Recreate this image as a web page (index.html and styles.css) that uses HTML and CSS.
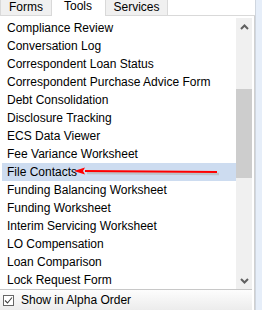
FILE: index.html
```html
<!DOCTYPE html>
<html>
<head>
<meta charset="utf-8">
<link rel="stylesheet" href="styles.css">
</head>
<body>
<div class="frame">
  <div class="left">
    <div class="tabs">
      <div class="tab forms">Forms</div>
      <div class="tab tools active">Tools</div>
      <div class="tab services">Services</div>
      <div class="tab-fill"></div>
    </div>
    <div class="panel">
      <div class="content">
        <ul class="list">
          <li>Compliance Review</li>
          <li>Conversation Log</li>
          <li>Correspondent Loan Status</li>
          <li>Correspondent Purchase Advice Form</li>
          <li>Debt Consolidation</li>
          <li>Disclosure Tracking</li>
          <li>ECS Data Viewer</li>
          <li>Fee Variance Worksheet</li>
          <li class="selected">File Contacts</li>
          <li>Funding Balancing Worksheet</li>
          <li>Funding Worksheet</li>
          <li>Interim Servicing Worksheet</li>
          <li>LO Compensation</li>
          <li>Loan Comparison</li>
          <li>Lock Request Form</li>
        </ul>
        <div class="scrollbar">
          <div class="arrow">
            <svg width="9" height="6" viewBox="0 0 9 6"><path d="M1 5 L4.5 1.5 L8 5" fill="none" stroke="#606060" stroke-width="2"/></svg>
          </div>
          <div class="track"><div class="thumb"></div></div>
          <div class="arrow">
            <svg width="9" height="6" viewBox="0 0 9 6"><path d="M1 1 L4.5 4.5 L8 1" fill="none" stroke="#606060" stroke-width="2"/></svg>
          </div>
        </div>
      </div>
      <div class="footer">
        <span class="check">
          <svg width="11" height="11" viewBox="0 0 11 11"><path d="M2 5.5 L4.5 8 L9 2.5" fill="none" stroke="#404040" stroke-width="1.1"/></svg>
        </span>
        <span class="label">Show in Alpha Order</span>
      </div>
    </div>
  </div>
  <div class="strip"></div>
  <svg class="annot" width="150" height="12" viewBox="0 0 150 12">
    <path d="M14 7 L146 8" stroke="#b0b0b0" stroke-opacity="0.6" stroke-width="2.5"/>
    <path d="M12 5 L144 6" stroke="#ff0000" stroke-width="2"/>
    <path d="M1 5 L12 1.5 L10 5 L12 8.5 Z" fill="#ff0000"/>
  </svg>
</div>
</body>
</html>
```
FILE: styles.css
```css
html, body {
  margin: 0;
  padding: 0;
  background: #ffffff;
}
body {
  font-family: "Liberation Sans", Arial, sans-serif;
  font-size: 12px;
  color: #000;
}
.frame {
  position: relative;
  width: 262px;
  height: 310px;
  display: flex;
  overflow: hidden;
}
.left {
  width: 255px;
  display: flex;
  flex-direction: column;
}
.strip {
  width: 6px;
  background: #e6eef9;
  border-left: 1px solid #cfd6df;
}
.tabs {
  display: flex;
  height: 16px;
  position: relative;
  z-index: 1;
}
.tab {
  box-sizing: border-box;
  height: 16px;
  line-height: 14px;
  text-align: center;
}
.forms, .services {
  background: #f0f0f0;
  border: 1px solid #d9d9d9;
  border-top: none;
}
.forms {
  width: 52px;
}
.tools {
  width: 52px;
  background: #fff;
  line-height: 12px;
  height: 17px;
}
.services {
  width: 63px;
  margin-left: 1px;
}
.tab-fill {
  flex: 1;
  border-bottom: 1px solid #d9d9d9;
}
.panel {
  flex: 1;
  display: flex;
  flex-direction: column;
  border-right: 1px solid #d0d0d0;
}
.content {
  flex: 1;
  display: flex;
  padding-top: 2px;
}
.list {
  list-style: none;
  margin: 0;
  padding: 1px 0 0 2px;
  flex: 1;
}
.list li {
  height: 18px;
  line-height: 18px;
  padding-left: 5px;
  white-space: nowrap;
}
.list li.selected {
  background: #cddcf0;
}
.scrollbar {
  width: 16px;
  margin-right: 2px;
  display: flex;
  flex-direction: column;
  background: #f0f0f0;
}
.arrow {
  height: 17px;
  display: flex;
  align-items: center;
  justify-content: center;
}
.track {
  flex: 1;
  padding-top: 54px;
}
.thumb {
  height: 89px;
  background: #cdcdcd;
}
.footer {
  height: 20px;
  border-top: 1px solid #c8c8c8;
  background: linear-gradient(#fdfdfd, #ececec);
  display: flex;
  align-items: center;
  padding-left: 3px;
  margin-right: 2px;
}
.check {
  width: 11px;
  height: 11px;
  border: 1px solid #666;
  box-sizing: border-box;
  display: flex;
  align-items: center;
  justify-content: center;
  background: #fff;
  margin-right: 7px;
}
.check svg {
  flex: none;
}
.label {
  line-height: 14px;
}
.annot {
  position: absolute;
  left: 73px;
  top: 166px;
}
```
